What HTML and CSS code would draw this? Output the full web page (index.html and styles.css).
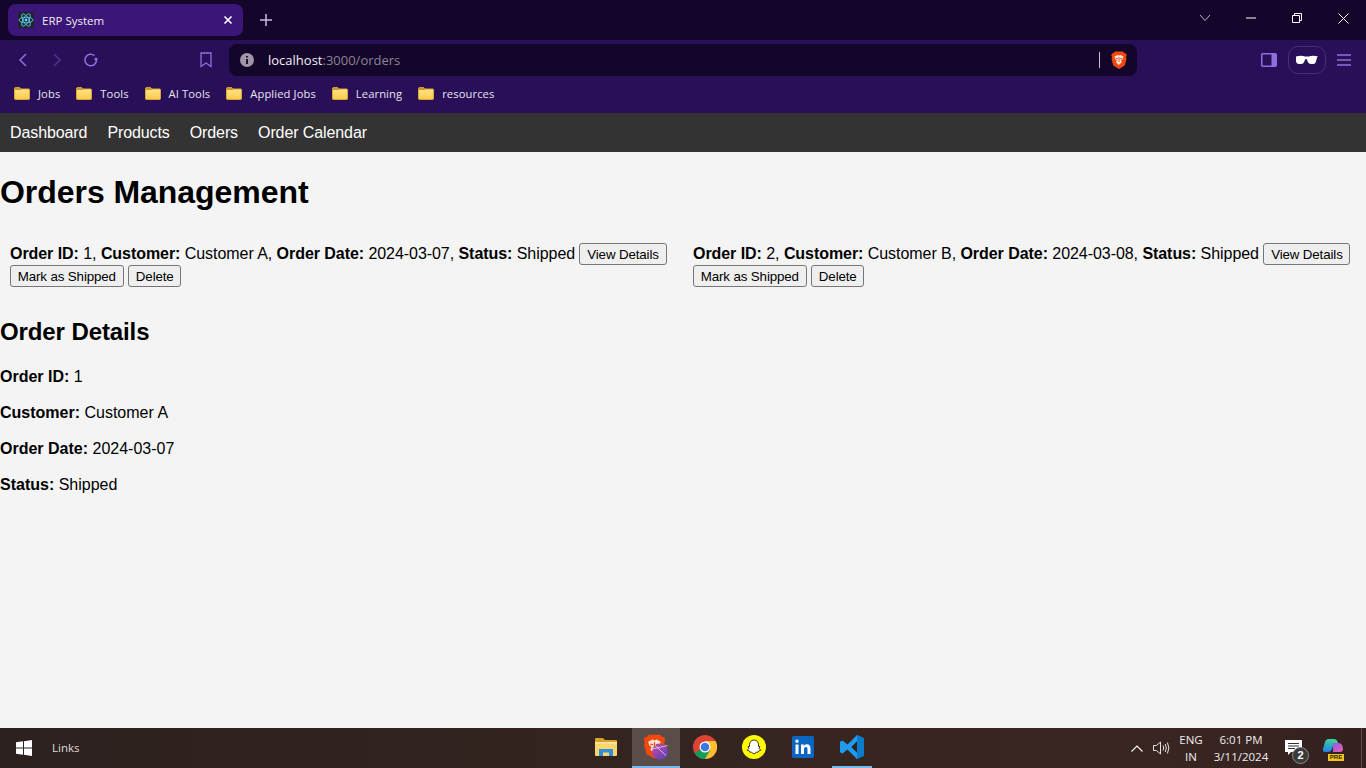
FILE: index.html
```html
<!DOCTYPE html>
<html lang="en">
<head>
<meta charset="utf-8">
<title>ERP System</title>
<meta name="viewport" content="width=device-width,initial-scale=1">
<link rel="stylesheet" href="styles.css">
</head>
<body>

<!-- shared icons -->
<svg class="defs" width="0" height="0">
  <defs>
    <linearGradient id="folderFill" x1="0" y1="0" x2="0" y2="1"><stop offset="0" stop-color="#ffe88f"/><stop offset="1" stop-color="#fcc94a"/></linearGradient>
    <linearGradient id="braveBall" x1="0" y1="0" x2="1" y2="1"><stop offset="0" stop-color="#c04f9e"/><stop offset="1" stop-color="#5a3fc0"/></linearGradient>
    <linearGradient id="copA" x1="0" y1="0" x2="0" y2="1"><stop offset="0" stop-color="#3fd0a0"/><stop offset="1" stop-color="#1f7fe8"/></linearGradient>
    <linearGradient id="copB" x1="0" y1="0" x2="1" y2="1"><stop offset="0" stop-color="#8a5cf0"/><stop offset="1" stop-color="#f05fa8"/></linearGradient>
    <symbol id="folder" viewBox="0 0 16 13">
      <path d="M.5 2q0-1.500 1-1.500h4l1.500 1.500h7.500q1 0 1 1v8.500q0 1-1 1h-13q-1 0-1-1z" fill="url(#folderFill)" stroke="#d9a53a"/>
      <path d="M.5 2q0-1.500 1-1.500h4l1.500 1.500v1h-6.500z" fill="#c9932f"/>
    </symbol>
    <symbol id="lion" viewBox="0 0 16 18">
      <path d="M4 .5h8l1.300 1.500 1.700.4.700 1.600-.7 2.500.5 1.500-1.800 6.500-5.700 3.400-5.700-3.400-1.800-6.500.5-1.500-.7-2.500.7-1.600 1.700-.4z" fill="#f1480f"/>
      <path d="M3.500 5.500l3-1.500 1.500.6 1.500-.6 3 1.500-.8 2.500-1.700 1.300.8 2-3 2.700-2.800-2.700.8-2-1.700-1.300z" fill="#ffe3d6"/>
      <path d="M5 7.300l2 .5M11 7.300l-2 .5M8 6v5" stroke="#f1480f" stroke-width=".9"/>
    </symbol>
  </defs>
</svg>

<!-- browser: tabs -->
<div class="tabstrip">
  <div class="tab">
    <svg class="favicon" viewBox="0 0 16 16" width="16" height="16">
      <rect width="16" height="16" rx="1" fill="#20232a"/>
      <g fill="none" stroke="#61dafb" stroke-width=".8">
        <ellipse cx="8" cy="8" rx="7" ry="2.800"/>
        <ellipse cx="8" cy="8" rx="7" ry="2.800" transform="rotate(60 8 8)"/>
        <ellipse cx="8" cy="8" rx="7" ry="2.800" transform="rotate(120 8 8)"/>
      </g>
      <circle cx="8" cy="8" r="1.400" fill="#61dafb"/>
    </svg>
    <span class="tab-title">ERP System</span>
    <svg class="tab-close" viewBox="0 0 10 10" width="10" height="10"><path d="M1.500 1.500l7 7M8.500 1.500l-7 7" stroke="#fff" stroke-width="1.600"/></svg>
  </div>
  <svg class="new-tab" viewBox="0 0 14 14" width="14" height="14"><path d="M7 1v12M1 7h12" stroke="#c9bde6" stroke-width="1.500"/></svg>
  <div class="win-controls">
    <span class="win-btn"><svg viewBox="0 0 12 8" width="12" height="8"><path d="M1 1l5 5.500 5-5.500" fill="none" stroke="#b9aecb"/></svg></span>
    <span class="win-btn"><svg viewBox="0 0 10 10" width="10" height="10"><path d="M0 5h10" stroke="#fff"/></svg></span>
    <span class="win-btn"><svg viewBox="0 0 10 10" width="10" height="10"><path d="M.5 2.500h7v7h-7zM2.500 2.500v-2h7v7h-2" fill="none" stroke="#fff"/></svg></span>
    <span class="win-btn"><svg viewBox="0 0 11 11" width="11" height="11"><path d="M.5.5l10 10M10.500.5l-10 10" stroke="#fff"/></svg></span>
  </div>
</div>

<!-- browser: address bar -->
<div class="toolbar">
  <svg class="tool-back" viewBox="0 0 10 14" width="10" height="14"><path d="M8 1L2 7l6 6" fill="none" stroke="#8e6fe0" stroke-width="1.500"/></svg>
  <svg class="tool-fwd" viewBox="0 0 10 14" width="10" height="14"><path d="M2 1l6 6-6 6" fill="none" stroke="#4b3290" stroke-width="1.500"/></svg>
  <svg class="tool-reload" viewBox="0 0 16 16" width="16" height="16"><path d="M13.500 8a5.800 5.800 0 1 1-2-4.400" fill="none" stroke="#8e6fe0" stroke-width="1.500"/><circle cx="13" cy="7" r="1.600" fill="#8e6fe0"/></svg>
  <svg class="tool-bookmark" viewBox="0 0 12 16" width="12" height="16"><path d="M1 1h10v13.500l-5-3.500-5 3.500z" fill="none" stroke="#8e6fe0" stroke-width="1.300"/></svg>
  <div class="urlbar">
    <svg class="url-info" viewBox="0 0 14 14" width="14" height="14"><circle cx="7" cy="7" r="7" fill="#9d97a8"/><path d="M7 3v1.600M7 6v5" stroke="#14052b" stroke-width="1.800"/></svg>
    <span class="url-text">localhost<span class="url-dim">:3000/orders</span></span>
    <span class="url-sep"></span>
    <svg class="url-brave" width="16" height="18"><use href="#lion"/></svg>
  </div>
  <svg class="tool-panel" viewBox="0 0 16 14" width="16" height="14"><rect x=".75" y=".75" width="14.500" height="12.500" rx="1" fill="none" stroke="#8e6fe0" stroke-width="1.500"/><rect x="10.500" y="1" width="5" height="12" fill="#8e6fe0"/></svg>
  <span class="tool-glasses">
    <svg viewBox="0 0 22 10" width="22" height="10"><path d="M0 1.500q5.500-1.500 9 0h4q3.500-1.500 9 0l-1 1-1 4q-.5 2.500-3 2.500h-2q-3 0-4-4.500q-.5-1-2 0q-1 4.500-4 4.500h-2q-2.500 0-3-2.500l-1-4z" fill="#fff"/></svg>
  </span>
  <svg class="tool-menu" viewBox="0 0 14 12" width="14" height="12"><path d="M0 1h14M0 6h14M0 11h14" stroke="#8e6fe0" stroke-width="1.300"/></svg>
</div>

<!-- browser: bookmarks -->
<div class="bookmarks">
  <span class="bookmark"><svg width="16" height="13"><use href="#folder"/></svg>Jobs</span>
  <span class="bookmark"><svg width="16" height="13"><use href="#folder"/></svg>Tools</span>
  <span class="bookmark"><svg width="16" height="13"><use href="#folder"/></svg>AI Tools</span>
  <span class="bookmark"><svg width="16" height="13"><use href="#folder"/></svg>Applied Jobs</span>
  <span class="bookmark"><svg width="16" height="13"><use href="#folder"/></svg>Learning</span>
  <span class="bookmark"><svg width="16" height="13"><use href="#folder"/></svg>resources</span>
</div>

<!-- the app -->
<nav class="navbar">
  <a href="#">Dashboard</a>
  <a href="#">Products</a>
  <a href="#">Orders</a>
  <a href="#">Order Calendar</a>
</nav>

<main class="page">
  <h1>Orders Management</h1>
  <ul class="orders">
    <li>
      <strong>Order ID:</strong> 1, <strong>Customer:</strong> Customer A, <strong>Order Date:</strong> 2024-03-07, <strong>Status:</strong> Shipped
      <button>View Details</button>
      <button>Mark as Shipped</button>
      <button>Delete</button>
    </li>
    <li>
      <strong>Order ID:</strong> 2, <strong>Customer:</strong> Customer B, <strong>Order Date:</strong> 2024-03-08, <strong>Status:</strong> Shipped
      <button>View Details</button>
      <button>Mark as Shipped</button>
      <button>Delete</button>
    </li>
  </ul>
  <h2>Order Details</h2>
  <p><strong>Order ID:</strong> 1</p>
  <p><strong>Customer:</strong> Customer A</p>
  <p><strong>Order Date:</strong> 2024-03-07</p>
  <p><strong>Status:</strong> Shipped</p>
</main>

<!-- windows taskbar -->
<footer class="taskbar">
  <div class="task-left">
    <svg class="win-logo" viewBox="0 0 16 16" width="16" height="16"><path d="M0 2.300l7-1v6.300H0zM8 1.200L16 0v7.600H8zM0 8.500h7v6.300l-7-1zM8 8.500h8V16l-8-1.200z" fill="#fff"/></svg>
    <span class="links">Links</span>
  </div>
  <div class="task-apps">
    <span class="app explorer">
      <svg viewBox="0 0 22 18" width="22" height="18"><path d="M0 1q0-1 1-1h7l2 2h11q1 0 1 1v3H0z" fill="#d9a02c"/><path d="M0 4h22v13q0 1-1 1H1q-1 0-1-1z" fill="#fbd56e"/><path d="M0 4h22v1.500H0z" fill="#ffe9a6"/><path d="M4 11h14v7h-4v-3.500H8V18H4z" fill="#2f8fd8"/></svg>
    </span>
    <span class="app active">
      <svg viewBox="0 0 26 26" width="26" height="26"><use href="#lion" width="23" height="25"/><circle cx="17" cy="17.500" r="8" fill="url(#braveBall)"/><path d="M9.500 15l15-3.500M12 11.500l11 10" stroke="#f6d1e4" stroke-width=".8"/></svg>
    </span>
    <span class="app">
      <svg viewBox="0 0 24 24" width="24" height="24"><circle cx="12" cy="12" r="12" fill="#db4437"/><path d="M12 12L1.600 18A12 12 0 0 0 12 24l5.500-6z" fill="#0f9d58"/><path d="M12 6h10.500A12 12 0 0 1 12 24l5.200-9z" fill="#fbc02d"/><circle cx="12" cy="12" r="5.500" fill="#fff"/><circle cx="12" cy="12" r="4.300" fill="#3b78e7"/></svg>
    </span>
    <span class="app">
      <svg viewBox="0 0 24 24" width="24" height="24"><circle cx="12" cy="12" r="12" fill="#fffc00"/><path d="M12 5c3 0 4.500 2.200 4.500 4.800v1.700l1.500.2-1 1.500 1.800 2-2.300.9-.5 1.200-1.500-.1L12 19l-2.500-1.800-1.500.1-.5-1.200-2.300-.9 1.800-2-1-1.500 1.500-.2V9.800C7.500 7.200 9 5 12 5z" fill="#fff" stroke="#222" stroke-width=".9"/></svg>
    </span>
    <span class="app">
      <svg viewBox="0 0 22 22" width="22" height="22"><rect width="22" height="22" rx="1.500" fill="#0a66c2"/><path d="M3.500 8.500h3V18h-3zM3.300 5.200a1.700 1.700 0 1 1 3.400 0 1.700 1.700 0 0 1-3.400 0zM9 8.500h2.900v1.300c.6-.9 1.600-1.600 3-1.600 2.600 0 3.600 1.600 3.600 4.300V18h-3v-5c0-1.300-.4-2.100-1.500-2.100S12 11.800 12 13v5H9z" fill="#fff"/></svg>
    </span>
    <span class="app running">
      <svg viewBox="0 0 24 24" width="24" height="24"><path d="M17 0l7 3.300v17.400L17 24 7.500 14.500 2.500 18.500 0 17.200V6.800l2.500-1.300 5 4zM17 6.500l-5.500 5.500 5.500 5.500z" fill="#1f9cf0"/><path d="M17 0l7 3.300v17.400L17 24z" fill="#0a7ccb"/><path d="M17 6.500v11L11.500 12z" fill="#2e2120"/></svg>
    </span>
  </div>
  <div class="tray">
    <svg class="tray-up" viewBox="0 0 12 7" width="12" height="7"><path d="M.5 6.500L6 1l5.500 5.500" fill="none" stroke="#fff" stroke-width="1.100"/></svg>
    <svg class="tray-sound" viewBox="0 0 17 14" width="17" height="14"><path d="M.5 4.500h3l4-3.500v12l-4-3.500h-3z" fill="none" stroke="#e6e2e0"/><path d="M10 4.500q1.500 2.500 0 5M12.200 3q2.300 4 0 8M14.400 1.500q3 5.500 0 11" fill="none" stroke="#e6e2e0"/></svg>
    <span class="tray-lang">ENG<br>IN</span>
    <span class="tray-clock">6:01 PM<br>3/11/2024</span>
    <span class="tray-note">
      <svg viewBox="0 0 17 15" width="17" height="15"><path d="M0 0h17v12H6l-3 3v-3H0z" fill="#fff"/><path d="M3 3.500h11M3 6h11M3 8.500h7" stroke="#333"/></svg>
      <span class="note-count">2</span>
    </span>
    <span class="tray-copilot">
      <svg viewBox="0 0 20 14" width="20" height="14"><path d="M6 0h6L9 10q-1 3-4 3H2q-2.500 0-2-3l2-7q.8-3 4-3z" fill="url(#copA)"/><path d="M10 4h6q2.500 0 3.300 2.500l.7 3.500q0 3-3 3h-7z" fill="url(#copB)"/><path d="M6 0h5q3 0 4 4H9z" fill="#3fcf8e"/></svg>
      <span class="copilot-pre">PRE</span>
    </span>
    <span class="show-desktop"></span>
  </div>
</footer>

</body>
</html>
```

FILE: styles.css
```css
* { box-sizing:border-box }
html,body { height:100% }
body { margin:0; display:flex; flex-direction:column; height:768px; overflow:hidden; font-family:"Liberation Sans",Arial,sans-serif; font-size:16px; background:#f4f4f4; color:#000 }
svg { display:block; flex:none }
.defs { position:absolute }

/* browser chrome */
.tabstrip { height:40px; background:#14052b; display:flex; align-items:flex-start; padding:4px 0 0 8px }
.tab { width:235px; height:32px; background:#3b1578; border-radius:8px; display:flex; align-items:center; padding:0 10px; color:#eee; font:11.500px "Open Sans",sans-serif }
.tab-title { margin-left:8px; flex:1 }
.new-tab { margin:9px 0 0 16px }
.win-controls { margin-left:auto; display:flex; height:28px }
.win-btn { width:46px; display:flex; align-items:center; justify-content:center }

.toolbar { height:40px; background:#280f57; display:flex; align-items:center }
.tool-back { margin-left:18px }
.tool-fwd { margin-left:24px }
.tool-reload { margin-left:21px }
.tool-bookmark { margin-left:101px }
.urlbar { width:908px; height:32px; margin-left:17px; background:#14052b; border-radius:8px; display:flex; align-items:center; padding:0 10px 0 11px }
.url-text { margin-left:14px; flex:1; color:#f2f0f5; font:13px "Open Sans",sans-serif }
.url-dim { color:#8a8494 }
.url-sep { width:1px; height:16px; background:#c8c4cf; margin-right:11px }
.tool-panel { margin-left:124px }
.tool-glasses { width:38px; height:28px; margin-left:11px; border:1px solid #46307c; border-radius:10px; display:flex; align-items:center; justify-content:center }
.tool-menu { margin-left:11px }

.bookmarks { height:33px; background:#280f57; display:flex; align-items:center; padding:0 0 6px 14px; gap:16px; color:#e8e4ee; font:11.200px "Open Sans",sans-serif; letter-spacing:.1px }
.bookmark { display:flex; align-items:center; gap:8px }

/* app */
.navbar { height:39px; background:#333; display:flex; gap:20px; padding:0 10px; align-items:center; flex:none; letter-spacing:-.1px }
.navbar a { color:#fff; text-decoration:none }

.page { flex:1 }
h1 { font-size:32px; margin:22px 0 21px; letter-spacing:-.05px }
.orders { list-style:none; margin:0; padding:11px 0 0; display:flex }
.orders li { width:50%; padding:0 10px 10px; line-height:21px; letter-spacing:-.055px }
.orders button { font:13.333px "Liberation Sans",Arial,sans-serif; letter-spacing:-.13px; height:22px; padding:1px 6.800px; background:#efefef; border:1px solid #767676; border-radius:3px; color:#000; vertical-align:.5px }
h2 { font-size:24px; margin:21px 0; letter-spacing:-.1px }
p { margin:16px 0; line-height:20px }

/* taskbar */
.taskbar { height:40px; flex:none; display:flex; align-items:center; background:linear-gradient(90deg,#2c211f,#33241f 40%,#3a2620 85%,#34201f); color:#eee; font:11.500px "Open Sans",sans-serif }
.task-left { width:581px; display:flex; align-items:center; padding-left:16px }
.links { margin:0 0 2px 20px; color:#ddd }
.task-apps { display:flex; height:40px }
.app { width:49px; height:40px; display:flex; align-items:center; justify-content:center; border-bottom:2px solid transparent }
.app.explorer { width:51px; padding-right:2px }
.app.active { background:#5a4c48; border-bottom-color:#76b9ed; width:48px }
.app.running { border-bottom-color:#76b9ed; width:40px; margin-left:5px }
.tray { margin-left:auto; display:flex; align-items:center; text-align:center; line-height:17px }
.tray-up { margin-right:10px }
.tray-sound { margin-right:5px }
.tray-lang { width:32px; margin-right:4px }
.tray-clock { width:60px; margin-right:14px }
.tray-note { position:relative; width:24px; height:24px; margin-right:14px; padding-top:4px }
.note-count { position:absolute; right:0; bottom:-4px; width:17px; height:17px; border-radius:50%; background:#3b3b3b; border:1px solid #8c8c8c; color:#fff; font:bold 11px/15px "Liberation Sans",sans-serif }
.tray-copilot { position:relative; width:22px; height:24px; margin-right:16px; padding-top:3px }
.copilot-pre { position:absolute; right:1px; bottom:-1px; width:16px; background:#f5c518; color:#222; font:bold 6px/7px "Liberation Sans",sans-serif }
.show-desktop { width:5px; height:40px; border-left:1px solid #5a4a45 }
```
